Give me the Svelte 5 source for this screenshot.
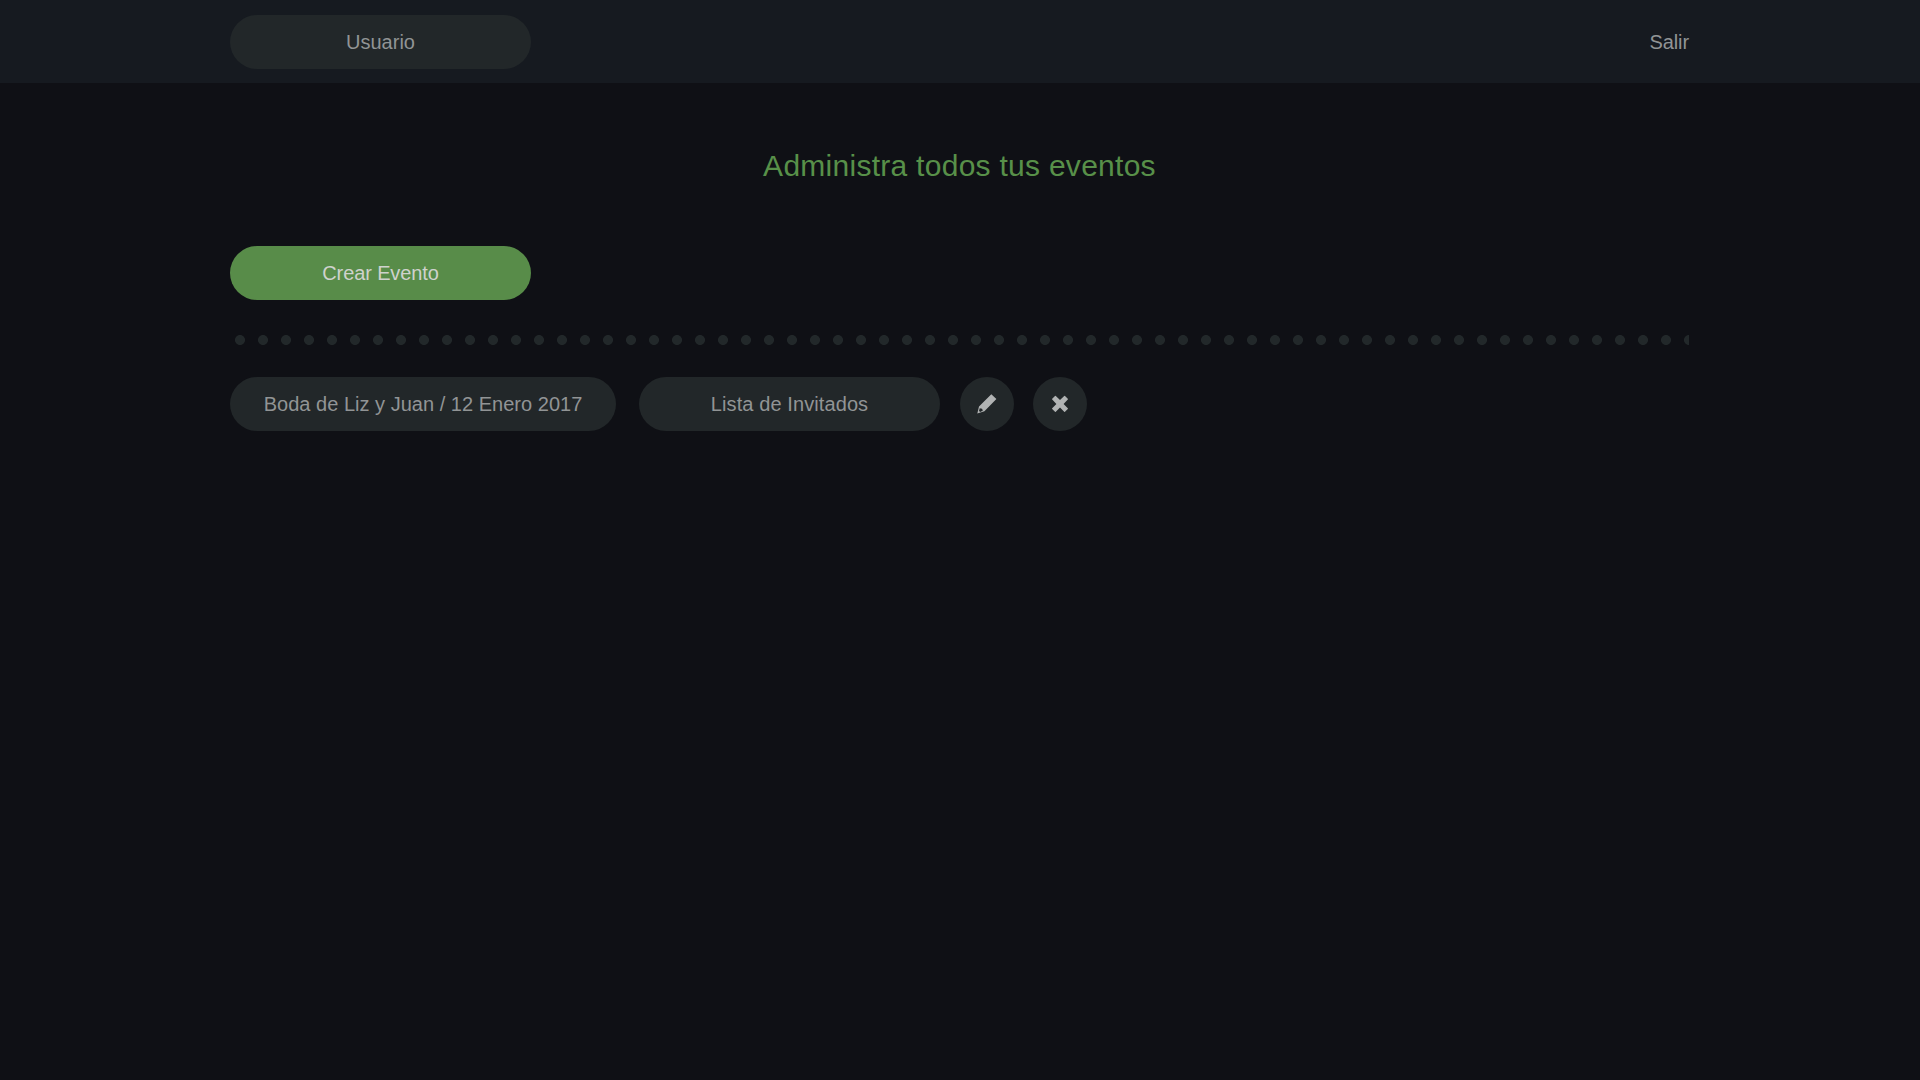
<script>
  const events = [{ name: 'Boda de Liz y Juan / 12 Enero 2017' }];
</script>

<div class="page">
  <header>
    <div class="container bar">
      <a class="pill"><span class="user">Usuario</span></a>
      <a class="exit">Salir</a>
    </div>
  </header>

  <main class="container">
    <h1>Administra todos tus eventos</h1>
    <a class="pill create"><span>Crear Evento</span></a>
    <div class="dots"></div>
    {#each events as event}
      <div class="row">
        <a class="pill event"><span>{event.name}</span></a>
        <a class="pill guests"><span>Lista de Invitados</span></a>
        <a class="round edit" aria-label="Editar">
          <svg width="54" height="54" viewBox="0 0 54 54">
            <path fill-rule="evenodd" d="M31.3 17.3 36.4 22.1 24.4 34.2 17.3 36.6 19 29.6ZM19.7 31.2 19 33.9 20.3 35 22.9 33.4 22 31.8Z" />
          </svg>
        </a>
        <a class="round" aria-label="Eliminar">
          <svg width="54" height="54" viewBox="0 0 54 54">
            <path d="M19.2 21.7 22 18.9Q22.4 18.5 22.8 18.9L27 23.1 31.2 18.9Q31.6 18.5 32 18.9L34.8 21.7Q35.2 22.1 34.8 22.5L30.6 26.9 34.8 31.2Q35.2 31.6 34.8 32L32 34.8Q31.6 35.2 31.2 34.8L27 30.6 22.8 34.8Q22.4 35.2 22 34.8L19.2 32Q18.8 31.6 19.2 31.2L23.4 26.9 19.2 22.5Q18.8 22.1 19.2 21.7Z" />
          </svg>
        </a>
      </div>
    {/each}
  </main>
</div>

<style>
  :global(body) { margin: 0; background: #0f1015; }
  .page {
    min-height: 1080px;
    background: #0f1015;
    color: #919495;
    font: 20px/54px "Liberation Sans", Arial, sans-serif;
  }
  header { height: 83px; background: #161a20; }
  .container { width: 1459px; margin: 0 0 0 230px; }
  .bar {
    display: flex;
    justify-content: space-between;
    padding-top: 15px;
  }
  .pill {
    display: block;
    width: 301px;
    height: 54px;
    border-radius: 27px;
    background: #222729;
    text-align: center;
    white-space: nowrap;
  }
  .exit { letter-spacing: -0.1px; }
  h1 {
    margin: 0;
    padding-top: 53px;
    font-size: 30px;
    line-height: 60px;
    font-weight: 400;
    letter-spacing: 0.27px;
    color: #589049;
    text-align: center;
  }
  .create {
    margin-top: 50px;
    background: #588c49;
    color: #cfd2cd;
    letter-spacing: -0.12px;
  }
  .dots {
    height: 10px;
    margin-top: 35px;
    background: radial-gradient(circle at 10px 5px, #22282a 4.6px, transparent 5.3px) 0 0 / 23px 10px repeat-x;
  }
  .row { display: flex; margin-top: 32px; }
  .event { width: 386px; letter-spacing: 0.02px; }
  .guests { margin-left: 23px; letter-spacing: 0.1px; }
  .round {
    width: 54px;
    height: 54px;
    margin-left: 19px;
    border-radius: 50%;
    background: #222729;
  }
  .edit { margin-left: 20px; }
  svg { display: block; fill: #b1b3b3; }
</style>
